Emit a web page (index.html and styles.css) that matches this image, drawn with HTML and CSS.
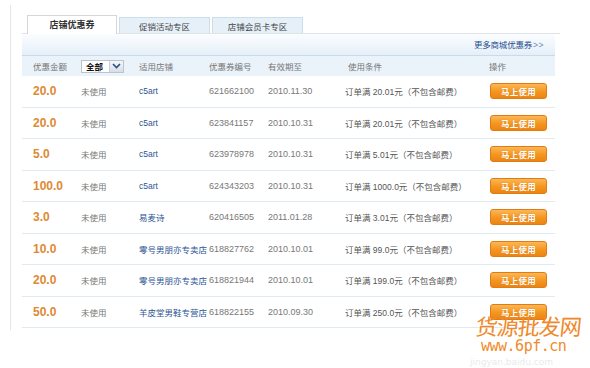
FILE: index.html
```html
<!DOCTYPE html>
<html lang="zh-CN">
<head>
<meta charset="utf-8">
<title>店铺优惠券</title>
<link rel="stylesheet" href="styles.css">
</head>
<body>
<div class="page">
  <div class="tabs">
    <div class="tab active">店铺优惠券</div>
    <div class="tab">促销活动专区</div>
    <div class="tab">店铺会员卡专区</div>
  </div>
  <div class="band"><a class="more">更多商城优惠券<span class="gt">&gt;&gt;</span></a></div>
  <div class="row head">
    <div class="c1">优惠金额</div>
    <div class="c2"><span class="select"><b>全部</b><span class="arr"><svg width="9" height="6" viewBox="0 0 9 6"><path d="M1 1l3.5 3.5L8 1" fill="none" stroke="#2a4f86" stroke-width="1.6"/></svg></span></span></div>
    <div class="c3">适用店铺</div>
    <div class="c4">优惠券编号</div>
    <div class="c5">有效期至</div>
    <div class="c6 hcond">使用条件</div>
    <div class="c7">操作</div>
  </div>
  <div class="row"><div class="amt">20.0</div><div class="st">未使用</div><div class="shop">c5art</div><div class="num">621662100</div><div class="num">2010.11.30</div><div class="cond">订单满 20.01元（不包含邮费）</div><div class="act"><span class="btn">马上使用</span></div></div>
  <div class="row"><div class="amt">20.0</div><div class="st">未使用</div><div class="shop">c5art</div><div class="num">623841157</div><div class="num">2010.10.31</div><div class="cond">订单满 20.01元（不包含邮费）</div><div class="act"><span class="btn">马上使用</span></div></div>
  <div class="row"><div class="amt">5.0</div><div class="st">未使用</div><div class="shop">c5art</div><div class="num">623978978</div><div class="num">2010.10.31</div><div class="cond">订单满 5.01元（不包含邮费）</div><div class="act"><span class="btn">马上使用</span></div></div>
  <div class="row"><div class="amt">100.0</div><div class="st">未使用</div><div class="shop">c5art</div><div class="num">624343203</div><div class="num">2010.10.31</div><div class="cond">订单满 1000.0元（不包含邮费）</div><div class="act"><span class="btn">马上使用</span></div></div>
  <div class="row"><div class="amt">3.0</div><div class="st">未使用</div><div class="shop">易麦诗</div><div class="num">620416505</div><div class="num">2011.01.28</div><div class="cond">订单满 3.01元（不包含邮费）</div><div class="act"><span class="btn">马上使用</span></div></div>
  <div class="row"><div class="amt">10.0</div><div class="st">未使用</div><div class="shop">零号男朋亦专卖店</div><div class="num">618827762</div><div class="num">2010.10.01</div><div class="cond">订单满 99.0元（不包含邮费）</div><div class="act"><span class="btn">马上使用</span></div></div>
  <div class="row"><div class="amt">20.0</div><div class="st">未使用</div><div class="shop">零号男朋亦专卖店</div><div class="num">618821944</div><div class="num">2010.10.01</div><div class="cond">订单满 199.0元（不包含邮费）</div><div class="act"><span class="btn">马上使用</span></div></div>
  <div class="row"><div class="amt">50.0</div><div class="st">未使用</div><div class="shop">羊皮堂男鞋专营店</div><div class="num">618822155</div><div class="num">2010.09.30</div><div class="cond">订单满 250.0元（不包含邮费）</div><div class="act"><span class="btn">马上使用</span></div></div>
</div>
<div class="wm-faint">jingyan.baidu.com</div>
<div class="wm-title">货源批发网</div>
<div class="wm-url">www.6pf.cn</div>
</body>
</html>
```
FILE: styles.css
```css
html, body {
  margin: 0;
  padding: 0;
  background: #fff;
}
body {
  width: 590px;
  height: 368px;
  overflow: hidden;
  position: relative;
  font-family: "Liberation Sans", "Noto Sans CJK SC", sans-serif;
  font-size: 8.5px;
  color: #777;
}
.page {
  margin: 5px 0 0 10px;
  width: 545px;
  height: 325px;
  border-left: 1px solid #e6e6e6;
  padding: 10px 0 0 11px;
  box-sizing: border-box;
}
.tabs {
  display: flex;
  align-items: flex-end;
  height: 18px;
  padding-left: 5px;
  border-bottom: 1px solid #dfe4ea;
  width: 533px;
  box-sizing: content-box;
  margin-right: -1px;
}
.tab {
  width: 91px;
  height: 16px;
  box-sizing: border-box;
  border: 1px solid #cfdde9;
  border-bottom: none;
  background: #e6f0f8;
  margin-left: 2px;
  display: flex;
  align-items: center;
  justify-content: center;
  color: #444;
  font-size: 8.5px;
}
.tab.active {
  width: 90px;
  height: 19px;
  margin-left: 0;
  margin-bottom: -1px;
  background: #fff;
  border-color: #d6d6d6;
  font-weight: bold;
  font-size: 9px;
  color: #333;
  padding-bottom: 1px;
}
.band {
  height: 22px;
  width: 533px;
  box-sizing: border-box;
  background: linear-gradient(#fbfdff, #e5eff8);
  border-bottom: 1px solid #c9dbea;
  display: flex;
  align-items: center;
  justify-content: flex-end;
  padding: 0 11px 2px 0;
}
.more {
  color: #1f4f8f;
  font-size: 8.5px;
  letter-spacing: -0.2px;
}
.more .gt {
  color: #6b8cb3;
  letter-spacing: 0.5px;
  margin-left: 1px;
}
.row {
  display: grid;
  grid-template-columns: 59px 58px 70px 59px 77px 144px 66px;
  width: 533px;
  height: 31.5px;
  box-sizing: border-box;
  border-bottom: 1px solid #e0eaf3;
  align-items: center;
}
.row > div:first-child {
  padding-left: 11px;
}
.row.head {
  height: 20px;
  background: #eaf2fa;
  border-bottom: none;
  color: #777;
}
.hcond {
  padding-left: 3px;
}
.select {
  display: inline-flex;
  align-items: center;
  width: 43px;
  height: 13px;
  box-sizing: border-box;
  border: 1px solid #b9c4cf;
  background: #fff;
  vertical-align: middle;
}
.select b {
  flex: 1;
  color: #111;
  padding-left: 4px;
  font-size: 8.5px;
}
.select .arr {
  width: 13px;
  height: 11px;
  background: linear-gradient(#f4f6f8, #d8dee5);
  border-left: 1px solid #c6cfd8;
  display: flex;
  align-items: center;
  justify-content: center;
}
.amt {
  font-family: "Liberation Sans", sans-serif;
  font-weight: bold;
  font-size: 12px;
  color: #dc8a34;
}
.st {
  color: #777;
}
.shop {
  color: #2b5593;
  white-space: nowrap;
}
.num {
  font-size: 9px;
  color: #777;
}
.cond {
  color: #555;
  white-space: nowrap;
}
.act {
  padding-left: 1px;
}
.btn {
  display: inline-flex;
  align-items: center;
  justify-content: center;
  width: 57px;
  height: 16px;
  box-sizing: border-box;
  border: 1px solid #e27c12;
  border-radius: 3px;
  background: linear-gradient(#fcb755, #f3961f 55%, #ec8512);
  color: #fff;
  font-weight: bold;
  font-size: 8.5px;
  letter-spacing: 0.3px;
  text-shadow: 0 0 1px #d8750c;
}
.wm-faint {
  position: absolute;
  left: 470px;
  top: 357px;
  font-family: "DejaVu Sans", sans-serif;
  font-size: 9px;
  line-height: 10px;
  color: #ebebeb;
}
.wm-title {
  position: absolute;
  left: 476px;
  top: 312px;
  font-family: "Noto Sans CJK SC", sans-serif;
  font-size: 22px;
  line-height: 26px;
  color: #f0892a;
  letter-spacing: -1px;
  transform: skewX(-6deg);
}
.wm-url {
  position: absolute;
  left: 481px;
  top: 337px;
  font-family: "DejaVu Sans Mono", monospace;
  font-size: 15px;
  line-height: 18px;
  color: #ef8a2b;
  letter-spacing: -0.5px;
}
```
